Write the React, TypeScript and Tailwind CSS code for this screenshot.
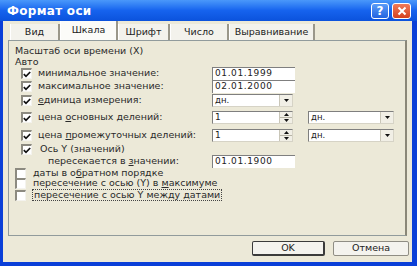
import React from "react";

const font = "font-['DejaVu_Sans',sans-serif]";

/* ── small XP-ish controls ── */
function CheckBox({ checked }: { checked?: boolean }) {
  return (
    <span className="w-[11px] h-[11px] shrink-0 bg-white border-t-2 border-l-2 border-t-[#8c8a80] border-l-[#8c8a80] border-r border-b border-r-[#f4f3ee] border-b-[#f4f3ee] flex items-center justify-center">
      {checked && (
        <svg width="8" height="7" viewBox="0 0 8 7">
          <polyline points="0.8,3.2 3,5.4 7.2,1" fill="none" stroke="#111" strokeWidth="1.7" />
        </svg>
      )}
    </span>
  );
}

function TextBox({ value, w = "w-[83px]" }: { value: string; w?: string }) {
  return (
    <div className={`${w} h-[13px] bg-white border-t border-l border-[#7f7f7f] border-r-[#f2f1ea] border-b-[#f2f1ea] flex items-center pl-[2px] text-[9px] tracking-[0.6px] text-[#222]`}>
      {value}
    </div>
  );
}

function Arrow({ up }: { up?: boolean }) {
  return (
    <svg width="5" height="3" viewBox="0 0 5 3">
      <polygon points={up ? "0,3 5,3 2.5,0" : "0,0 5,0 2.5,3"} fill="#111" />
    </svg>
  );
}

function Combo({ value, w = "w-[81px]" }: { value: string; w?: string }) {
  return (
    <div className={`${w} h-[13px] bg-white border-t border-l border-[#7f7f7f] border-r border-b border-r-[#d6d3c6] border-b-[#d6d3c6] flex items-center text-[8.5px] text-[#222]`}>
      <span className="flex-1 pl-[2px]">{value}</span>
      <span className="w-[13px] h-full bg-[#f1efe6] border-l border-[#c9c6b8] flex items-center justify-center">
        <Arrow />
      </span>
    </div>
  );
}

function Spin({ value }: { value: string }) {
  return (
    <div className="w-[81px] h-[13px] bg-white border-t border-l border-[#7f7f7f] border-r border-b border-r-[#d6d3c6] border-b-[#d6d3c6] flex items-center text-[9px] text-[#222]">
      <span className="flex-1 pl-[2px]">{value}</span>
      <span className="w-[13px] h-full bg-[#f1efe6] border-l border-[#c9c6b8] flex flex-col">
        <span className="flex-1 flex items-center justify-center border-b border-[#b8b5a6]">
          <Arrow up />
        </span>
        <span className="flex-1 flex items-center justify-center">
          <Arrow />
        </span>
      </span>
    </div>
  );
}

function Tab({ label, w, active }: { label: string; w: string; active?: boolean }) {
  return (
    <div
      className={`${w} flex items-center justify-center border-r-2 border-r-[#9a978a] border-l border-l-white ${
        active ? "h-[19px] bg-[#fbfbf8]" : "h-[16px] bg-[#f3f2ec]"
      }`}
    >
      {label}
    </div>
  );
}

function Row({ h, children, cls = "" }: { h: string; children: React.ReactNode; cls?: string }) {
  return <div className={`${h} flex items-center ${cls}`}>{children}</div>;
}

export default function App() {
  return (
    <div className={`w-[417px] h-[266px] bg-[#0a3fd8] flex flex-col overflow-hidden text-[#1f1f1f] ${font}`}>
      {/* Title bar */}
      <div className="h-[21px] shrink-0 bg-gradient-to-b from-[#4a98fa] via-[#1663ee] to-[#0b52dc] flex items-center pl-[7px] pr-[6px]">
        <span className="text-white font-bold text-[12px] tracking-[0.3px] flex-1">Формат оси</span>
        <div className="flex gap-[3px]">
          <span className="w-[18px] h-[16px] rounded-[3px] border border-white bg-gradient-to-b from-[#5b9cf8] to-[#2363e0] flex items-center justify-center text-white font-bold text-[12px]">
            ?
          </span>
          <span className="w-[19px] h-[16px] rounded-[3px] border border-white bg-gradient-to-b from-[#f07a58] to-[#d4401c] flex items-center justify-center">
            <svg width="10" height="10" viewBox="0 0 10 10">
              <path d="M1.5 1.5 L8.5 8.5 M8.5 1.5 L1.5 8.5" stroke="white" strokeWidth="2" />
            </svg>
          </span>
        </div>
      </div>

      {/* Dialog body */}
      <div className="flex-1 ml-[3px] mr-[5px] mb-[4px] bg-[#ece9d8] flex flex-col">
        {/* Tabs */}
        <div className="h-[19px] pt-[1px] pl-[7px] flex items-end text-[9.5px] text-[#222]">
          <Tab label="Вид" w="w-[50px]" />
          <Tab label="Шкала" w="w-[58px]" active />
          <Tab label="Шрифт" w="w-[52px]" />
          <Tab label="Число" w="w-[59px]" />
          <Tab label="Выравнивание" w="w-[86px]" />
        </div>

        {/* Panel */}
        <div className="ml-[5px] mr-[5px] h-[196px] border border-[#919b9c] border-r-2 border-r-[#8a8778] bg-[#ece9d8] pt-[4px] text-[9.5px] text-[#2a2a2a]">
          <Row h="h-[12px]" cls="pl-[6px]">Масштаб оси времени (X)</Row>
          <Row h="h-[10px]" cls="pl-[6px]">Авто</Row>

          <Row h="h-[13px]">
            <div className="w-[203px] flex items-center gap-[6px] pl-[12px]">
              <CheckBox checked />
              <span>минимальное значение:</span>
            </div>
            <TextBox value="01.01.1999" />
          </Row>
          <Row h="h-[13px]">
            <div className="w-[203px] flex items-center gap-[6px] pl-[12px]">
              <CheckBox checked />
              <span>максимальное значение:</span>
            </div>
            <TextBox value="02.01.2000" />
          </Row>
          <Row h="h-[13px]" cls="mt-[1px]">
            <div className="w-[203px] flex items-center gap-[6px] pl-[12px]">
              <CheckBox checked />
              <span>
                <u>е</u>диница измерения:
              </span>
            </div>
            <Combo value="дн." />
          </Row>
          <Row h="h-[13px]" cls="mt-[4px]">
            <div className="w-[203px] flex items-center gap-[6px] pl-[12px]">
              <CheckBox checked />
              <span>
                цена <u>о</u>сновных делений:
              </span>
            </div>
            <Spin value="1" />
            <div className="ml-[15px]">
              <Combo value="дн." w="w-[86px]" />
            </div>
          </Row>
          <Row h="h-[13px]" cls="mt-[5px]">
            <div className="w-[203px] flex items-center gap-[6px] pl-[12px]">
              <CheckBox checked />
              <span>
                цена <u>п</u>ромежуточных делений:
              </span>
            </div>
            <Spin value="1" />
            <div className="ml-[15px]">
              <Combo value="дн." w="w-[86px]" />
            </div>
          </Row>
          <Row h="h-[11px]" cls="mt-[2px] gap-[8px] pl-[12px]">
            <CheckBox checked />
            <span>Ось Y (значений)</span>
          </Row>
          <Row h="h-[13px]">
            <div className="w-[203px] pl-[39px]">
              пересекается в <u>з</u>начении:
            </div>
            <TextBox value="01.01.1900" />
          </Row>
          <Row h="h-[10px]" cls="gap-[7px] pl-[6px]">
            <CheckBox />
            <span>
              даты в о<u>б</u>ратном порядке
            </span>
          </Row>
          <Row h="h-[11px]" cls="gap-[7px] pl-[6px]">
            <CheckBox />
            <span>
              пересечение с осью (Y) в <u>м</u>аксимуме
            </span>
          </Row>
          <Row h="h-[12px]" cls="gap-[6px] pl-[6px]">
            <CheckBox />
            <span className="border border-dotted border-[#444] px-[1px] leading-[10px]">
              пересечение с осью Y между датами
            </span>
          </Row>
        </div>

        {/* Buttons */}
        <div className="flex-1 flex items-center justify-end gap-[8px] pr-[3px] pb-[1px] text-[9.5px] text-[#222]">
          <button className="w-[73px] h-[15px] bg-[#f4f3ee] border border-[#3b3b3b] border-r-2 border-b-2 rounded-[2px] flex items-center justify-center">
            OK
          </button>
          <button className="w-[76px] h-[15px] bg-[#f4f3ee] border border-[#8f8d84] rounded-[2px] flex items-center justify-center">
            Отмена
          </button>
        </div>
      </div>
    </div>
  );
}
